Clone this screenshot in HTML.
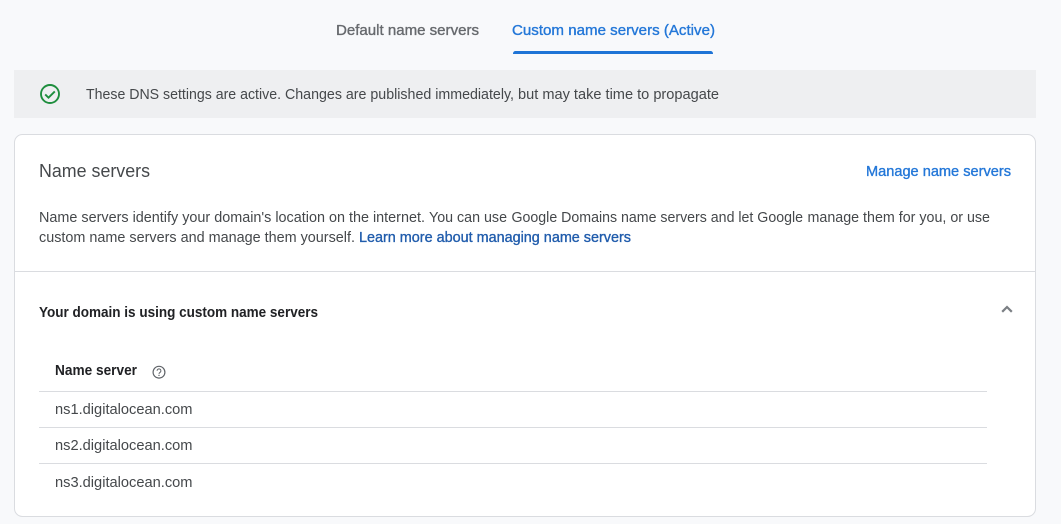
<!DOCTYPE html>
<html lang="en">
<head>
<meta charset="utf-8">
<title>Name servers</title>
<style>
html,body{margin:0;padding:0;width:1061px;height:524px;overflow:hidden;background:#f8f9fb}
svg{display:block}
text{font-family:"Liberation Sans",Arial,sans-serif;font-size:14.4px}
.b{fill:#45484b}
.m{stroke-width:.35px;paint-order:stroke}
</style>
</head>
<body>
<svg width="1061" height="524" viewBox="0 0 1061 524" xmlns="http://www.w3.org/2000/svg">
<rect width="1061" height="524" fill="#f8f9fb"/>
<text x="336" y="35" textLength="143" lengthAdjust="spacingAndGlyphs" class="m" fill="#66696d" stroke="#66696d">Default name servers</text>
<text x="512" y="35" textLength="203" lengthAdjust="spacingAndGlyphs" class="m" fill="#2377d8" stroke="#2377d8">Custom name servers (Active)</text>
<path d="M513 54v-.5a2.5 2.5 0 0 1 2.5-2.5h195a2.5 2.5 0 0 1 2.5 2.5v.5z" fill="#1f74d6"/>
<rect x="14" y="70" width="1022" height="48" fill="#eeeff1"/>
<circle cx="50" cy="94" r="9" fill="none" stroke="#1e8e3e" stroke-width="1.9"/>
<path d="M45.2 94.4l3.3 3.3 6.3-6.3" fill="none" stroke="#1e8e3e" stroke-width="1.9"/>
<text x="86" y="99" textLength="195" lengthAdjust="spacingAndGlyphs" class="b">These DNS settings are active.</text>
<text x="285" y="99" textLength="229" lengthAdjust="spacingAndGlyphs" class="b">Changes are published immediately,</text>
<text x="518" y="99" textLength="201" lengthAdjust="spacingAndGlyphs" class="b">but may take time to propagate</text>
<rect x="14.5" y="134.5" width="1021" height="382" rx="8" ry="8" fill="#fff" stroke="#dadce0"/>
<text x="39" y="177" textLength="111" lengthAdjust="spacingAndGlyphs" style="font-size:18px" class="b">Name servers</text>
<text x="866" y="176" textLength="145" lengthAdjust="spacingAndGlyphs" class="m" fill="#2377d8" stroke="#2377d8">Manage name servers</text>
<text x="39" y="222" textLength="386" lengthAdjust="spacingAndGlyphs" class="b">Name servers identify your domain's location on the internet.</text>
<text x="429" y="222" textLength="78" lengthAdjust="spacingAndGlyphs" class="b">You can use</text>
<text x="511.5" y="222" textLength="291.5" lengthAdjust="spacingAndGlyphs" class="b">Google Domains name servers and let Google</text>
<text x="807.5" y="222" textLength="182.5" lengthAdjust="spacingAndGlyphs" class="b">manage them for you, or use</text>
<text x="39" y="242" textLength="316" lengthAdjust="spacingAndGlyphs" class="b">custom name servers and manage them yourself.</text>
<text x="359" y="242" textLength="272" lengthAdjust="spacingAndGlyphs" class="m" fill="#205cac" stroke="#205cac">Learn more about managing name servers</text>
<rect x="15" y="271" width="1020" height="1" fill="#dadce0"/>
<text x="39" y="317" textLength="279" lengthAdjust="spacingAndGlyphs" font-weight="700" fill="#202124">Your domain is using custom name servers</text>
<path d="M1002.2 311.8l4.8-4.8 4.8 4.8" fill="none" stroke="#7b7f84" stroke-width="2.2"/>
<text x="55" y="375" textLength="82" lengthAdjust="spacingAndGlyphs" font-weight="700" fill="#202124">Name server</text>
<circle cx="159" cy="372.2" r="5.9" fill="none" stroke="#5f6368" stroke-width="1.2"/>
<path d="M157.1 370.8a1.9 1.9 0 1 1 3 1.5c-.7.5-1.1.8-1.1 1.6" fill="none" stroke="#5f6368" stroke-width="1"/>
<rect x="158.4" y="374.8" width="1.2" height="1.2" fill="#5f6368"/>
<rect x="39" y="391" width="948" height="1" fill="#dadce0"/>
<text x="55" y="414" textLength="137.5" lengthAdjust="spacingAndGlyphs" class="b">ns1.digitalocean.com</text>
<rect x="39" y="427" width="948" height="1" fill="#dadce0"/>
<text x="55" y="450" textLength="137.5" lengthAdjust="spacingAndGlyphs" class="b">ns2.digitalocean.com</text>
<rect x="39" y="463" width="948" height="1" fill="#dadce0"/>
<text x="55" y="487" textLength="137.5" lengthAdjust="spacingAndGlyphs" class="b">ns3.digitalocean.com</text>
</svg>
</body>
</html>
